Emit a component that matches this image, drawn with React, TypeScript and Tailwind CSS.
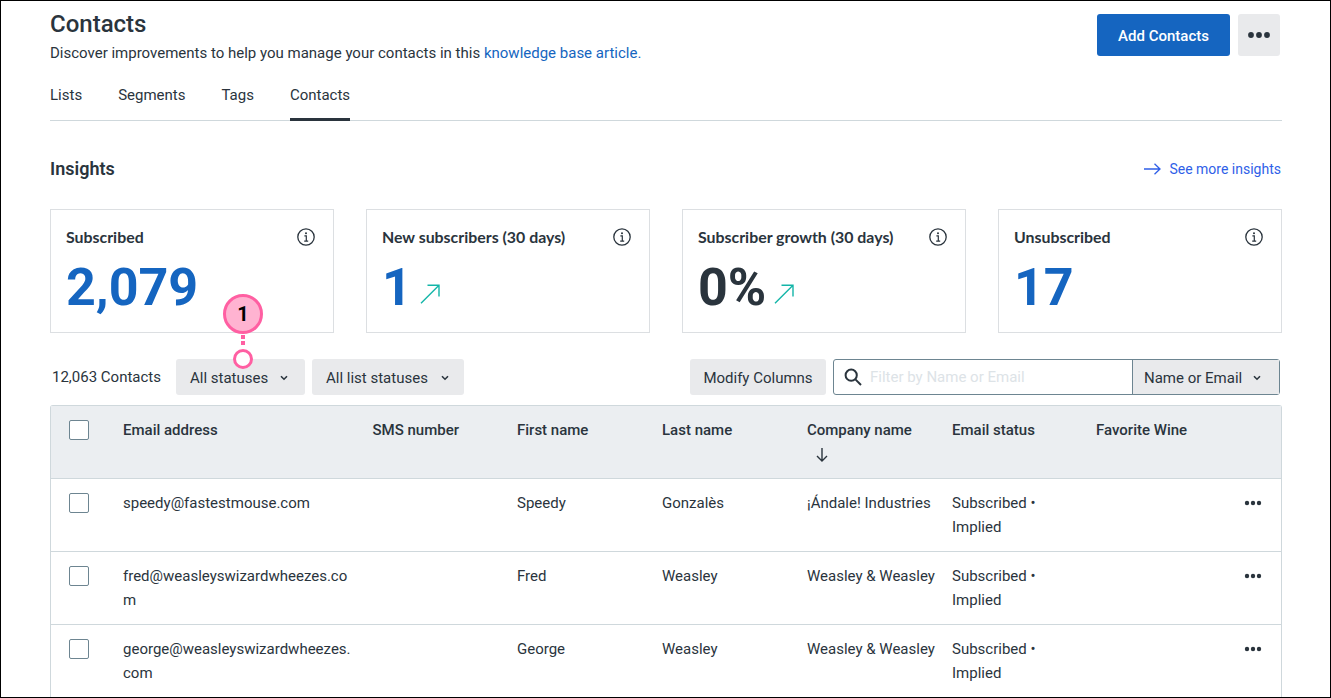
import React from "react";

const Dots = ({ big }: { big?: boolean }) => (
  <svg width={big ? 22 : 18} height="6" viewBox={big ? "0 0 22 6" : "0 0 18 6"} fill="#2a343d">
    {big ? (
      <>
        <circle cx="3" cy="3" r="2.9" />
        <circle cx="11" cy="3" r="2.9" />
        <circle cx="19" cy="3" r="2.9" />
      </>
    ) : (
      <>
        <circle cx="3" cy="3" r="2.2" />
        <circle cx="9" cy="3" r="2.2" />
        <circle cx="15" cy="3" r="2.2" />
      </>
    )}
  </svg>
);

const Chevron = () => (
  <svg width="8" height="6" viewBox="0 0 8 6" fill="none" stroke="#2a343d" strokeWidth="1.6">
    <path d="M1 1.2l3 3 3-3" />
  </svg>
);

const Info = () => (
  <svg width="18" height="18" viewBox="0 0 18 18" fill="none" stroke="#2a343d">
    <circle cx="9" cy="9" r="8.2" strokeWidth="1.3" />
    <circle cx="9" cy="5.2" r="1" fill="#2a343d" stroke="none" />
    <path d="M7.4 7.8H9.3V13M7.2 13.2h4" strokeWidth="1.2" />
  </svg>
);

const Up = () => (
  <svg width="20" height="20" viewBox="0 0 20 20" fill="none" stroke="#13b5a8" strokeWidth="1.4">
    <path d="M1 19.2L19 1.2M7.5 1.2H19V12.5" />
  </svg>
);

const Card = ({ title, value, dark, up }: { title: string; value: string; dark?: boolean; up?: boolean }) => (
  <div className="h-[124px] border border-[#dcdfe2] bg-white pl-[15px] pr-[18px] pt-[17px]">
    <div className="flex items-center justify-between h-[20px]">
      <span className="font-[Lato,sans-serif] font-bold text-[15.9px] text-[#2a343d]">{title}</span>
      <Info />
    </div>
    <div className="mt-[12px] flex items-end gap-[8px] h-[58px]">
      <span className={`font-[Roboto,sans-serif] font-bold text-[52px] leading-[58px] ${dark ? "text-[#2a343d]" : "text-[#1565c0]"}`}>{value}</span>
      {up && <span className="mb-[13px]"><Up /></span>}
    </div>
  </div>
);

const Check = () => <div className="w-[20px] h-[20px] rounded-[2px] border border-[#6d8591] bg-white" />;

const cols = "grid grid-cols-[72px_249.5px_144.5px_145px_145px_145px_144px_1fr]";

const Row = ({ email, first, last, company, cut }: { email: string; first: string; last: string; company: string; cut?: boolean }) => (
  <div className={`${cols} h-[73px] pt-[12px] text-[15px] leading-[24px] text-[#2a343d] ${cut ? "" : "border-b border-[#cfd8dc]"}`}>
    <div className="pl-[18px] pt-[2px]"><Check /></div>
    <div className="w-[230px] break-all">{email}</div>
    <div />
    <div>{first}</div>
    <div>{last}</div>
    <div className="whitespace-nowrap">{company}</div>
    <div>Subscribed •<br />Implied</div>
    <div className="flex justify-end pr-[19px] pt-[9px] h-[18px]"><Dots /></div>
  </div>
);

const Head = ({ children }: { children: React.ReactNode }) => (
  <div className="font-medium text-[#2a343d]">{children}</div>
);

const GreyBtn = ({ children, cls }: { children: React.ReactNode; cls: string }) => (
  <button className={`h-[36px] rounded-[3px] bg-[#e9eaec] flex items-center pt-[2px] text-[15px] text-[#2a343d] ${cls}`}>{children}</button>
);

export default function App() {
  return (
    <div className="relative w-[1331px] h-[698px] overflow-hidden border border-black bg-white font-[Roboto,sans-serif] pl-[49px] pr-[48px] text-[#2a343d]">
      {/* header */}
      <div className="flex justify-between h-[55px] pt-[10px]">
        <div>
          <h1 className="font-medium text-[24px] leading-[26px]">Contacts</h1>
          <p className="text-[15px] leading-[22px] mt-[5px]">
            Discover improvements to help you manage your contacts in this{" "}
            <span className="text-[#1565c0]">knowledge base article.</span>
          </p>
        </div>
        <div className="flex gap-[8px] pt-[3px] pr-[2px]">
          <button className="w-[133px] h-[42px] pt-[2px] rounded-[3px] bg-[#1565c0] text-white font-medium text-[15px]">Add Contacts</button>
          <button className="w-[42px] h-[42px] rounded-[3px] bg-[#e9eaec] flex items-center justify-center"><Dots big /></button>
        </div>
      </div>

      {/* tabs */}
      <div className="flex gap-[36px] h-[65px] border-b border-[#cfd8dc] pt-[28px] text-[15px] leading-[22px]">
        <span>Lists</span>
        <span>Segments</span>
        <span>Tags</span>
        <span className="h-[37px] border-b-[3px] border-[#2a343d]">Contacts</span>
      </div>

      {/* insights */}
      <div className="flex items-center justify-between mt-[34px] h-[26px]">
        <h2 className="font-semibold text-[18px]">Insights</h2>
        <a className="flex items-center gap-[8px] pt-[2px] text-[14px] text-[#2f5fe8] pr-[1px]">
          <svg width="17" height="12" viewBox="0 0 17 12" fill="none" stroke="#2f5fe8" strokeWidth="1.3">
            <path d="M0 6H16M10.5 .8L16 6l-5.5 5.2" />
          </svg>
          See more insights
        </a>
      </div>

      <div className="grid grid-cols-4 gap-[32px] mt-[28px]">
        <Card title="Subscribed" value="2,079" />
        <Card title="New subscribers (30 days)" value="1" up />
        <Card title="Subscriber growth (30 days)" value="0%" dark up />
        <Card title="Unsubscribed" value="17" />
      </div>

      {/* toolbar */}
      <div className="flex items-center mt-[26px] h-[36px]">
        <span className="ml-[2px] w-[124px] text-[15px]">12,063 Contacts</span>
        <GreyBtn cls="w-[129px] pl-[14px] gap-[12px]">All statuses <Chevron /></GreyBtn>
        <div className="w-[7px]" />
        <GreyBtn cls="w-[152px] pl-[14px] gap-[13px]">All list statuses <Chevron /></GreyBtn>
        <div className="ml-auto" />
        <GreyBtn cls="w-[136px] justify-center">Modify Columns</GreyBtn>
        <div className="ml-[7px] mr-[2px] flex h-[36px] w-[447px] rounded-[3px] border border-[#6d8591]">
          <div className="flex flex-1 items-center gap-[8px] pl-[10px]">
            <svg width="18" height="18" viewBox="0 0 18 18" fill="none" stroke="#2a343d" strokeWidth="2">
              <circle cx="7.2" cy="7.2" r="5.6" />
              <path d="M11.4 11.4L17 17" />
            </svg>
            <span className="text-[15px] text-[#dde3e7]">Filter by Name or Email</span>
          </div>
          <div className="w-[147px] border-l border-[#6d8591] bg-[#e9eaec] flex items-center pl-[11px] pt-[2px] gap-[11px] text-[15px]">Name or Email <Chevron /></div>
        </div>
      </div>

      {/* table */}
      <div className="mt-[10px] rounded-t-[3px] border-x border-t border-[#cfd8dc]">
        <div className={`${cols} h-[73px] bg-[#ebeef1] border-b border-[#cfd8dc] pt-[12px] text-[15px] leading-[24px]`}>
          <div className="pl-[18px] pt-[2px]"><Check /></div>
          <Head>Email address</Head>
          <Head>SMS number</Head>
          <Head>First name</Head>
          <Head>Last name</Head>
          <div>
            <Head>Company name</Head>
            <svg className="ml-[9px] mt-[6px]" width="12" height="14" viewBox="0 0 12 14" fill="none" stroke="#2a343d" strokeWidth="1.4">
              <path d="M6 0V13M1 8l5 5 5-5" />
            </svg>
          </div>
          <Head>Email status</Head>
          <Head>Favorite Wine</Head>
        </div>
        <Row email="speedy@fastestmouse.com" first="Speedy" last="Gonzalès" company="¡Ándale! Industries" />
        <Row email="fred@weasleyswizardwheezes.com" first="Fred" last="Weasley" company="Weasley & Weasley" />
        <Row email="george@weasleyswizardwheezes.com" first="George" last="Weasley" company="Weasley & Weasley" cut />
      </div>

      {/* annotation */}
      <div className="absolute left-[222px] top-[293px] w-[40px] h-[40px] rounded-full border-[3px] border-[#ff5fa2] bg-[#ffb3d1] flex items-center justify-center font-[Roboto,sans-serif] font-bold text-[20px] text-black">1</div>
      <div className="absolute left-[240px] top-[334px] w-[4px] h-[4px] bg-[#ff5fa2]" />
      <div className="absolute left-[240px] top-[340px] w-[4px] h-[4px] bg-[#ff5fa2]" />
      <div className="absolute left-[232px] top-[348px] w-[20px] h-[20px] rounded-full border-[3px] border-[#ff5fa2] bg-white" />
    </div>
  );
}
